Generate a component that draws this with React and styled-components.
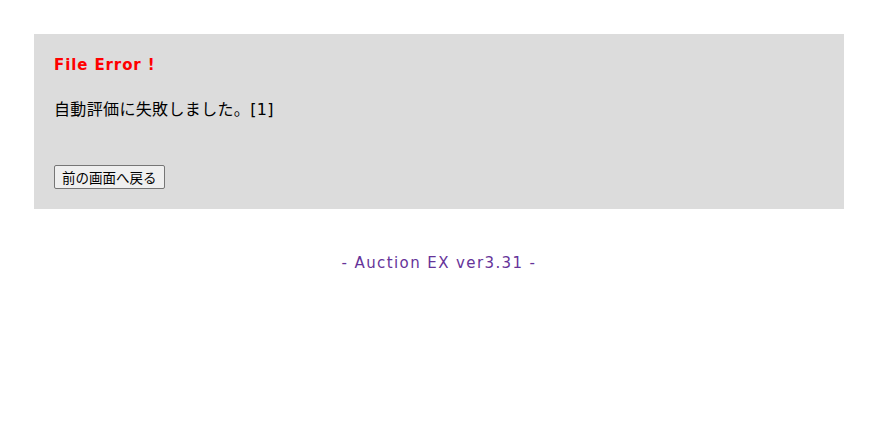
import React from 'react'
import styled, { createGlobalStyle } from 'styled-components'

const Global = createGlobalStyle`
  html, body {
    margin: 0;
    padding: 0;
    background: #ffffff;
  }
  body {
    font-family: "DejaVu Sans", Verdana, "Noto Sans CJK JP", sans-serif;
  }
`

const Page = styled.div`
  width: 883px;
  padding: 34px 0 0 34px;
  box-sizing: border-box;
`

const ErrorBox = styled.div`
  width: 810px;
  height: 175px;
  box-sizing: border-box;
  background: #dcdcdc;
  padding: 21px 20px 0 20px;
  display: flex;
  flex-direction: column;
`

const Title = styled.div`
  color: #ff0000;
  font-weight: bold;
  font-size: 15px;
  letter-spacing: 0.9px;
  line-height: 20px;
`

const Message = styled.div`
  margin-top: 25px;
  font-size: 16px;
  letter-spacing: 0.35px;
  line-height: 20px;
  color: #000;
  font-family: "DejaVu Sans", "Noto Sans CJK JP", sans-serif;
`

const BackButton = styled.button`
  align-self: flex-start;
  margin-top: 45px;
  height: 24px;
  padding: 0 7px;
  font-family: "Noto Sans CJK JP", sans-serif;
  font-size: 13.5px;
  color: #000;
  background: #efefef;
  border: 1px solid #767676;
  border-radius: 2px;
`

const Footer = styled.div`
  width: 810px;
  margin-top: 42px;
  text-align: center;
  font-size: 15px;
  letter-spacing: 1.4px;
  line-height: 24px;
  color: #663399;
`

const App = () => {
  return (
    <Page>
      <Global />
      <ErrorBox>
        <Title>File Error !</Title>
        <Message>自動評価に失敗しました。[1]</Message>
        <BackButton type='button'>前の画面へ戻る</BackButton>
      </ErrorBox>
      <Footer>- Auction EX ver3.31 -</Footer>
    </Page>
  )
}

export default App
